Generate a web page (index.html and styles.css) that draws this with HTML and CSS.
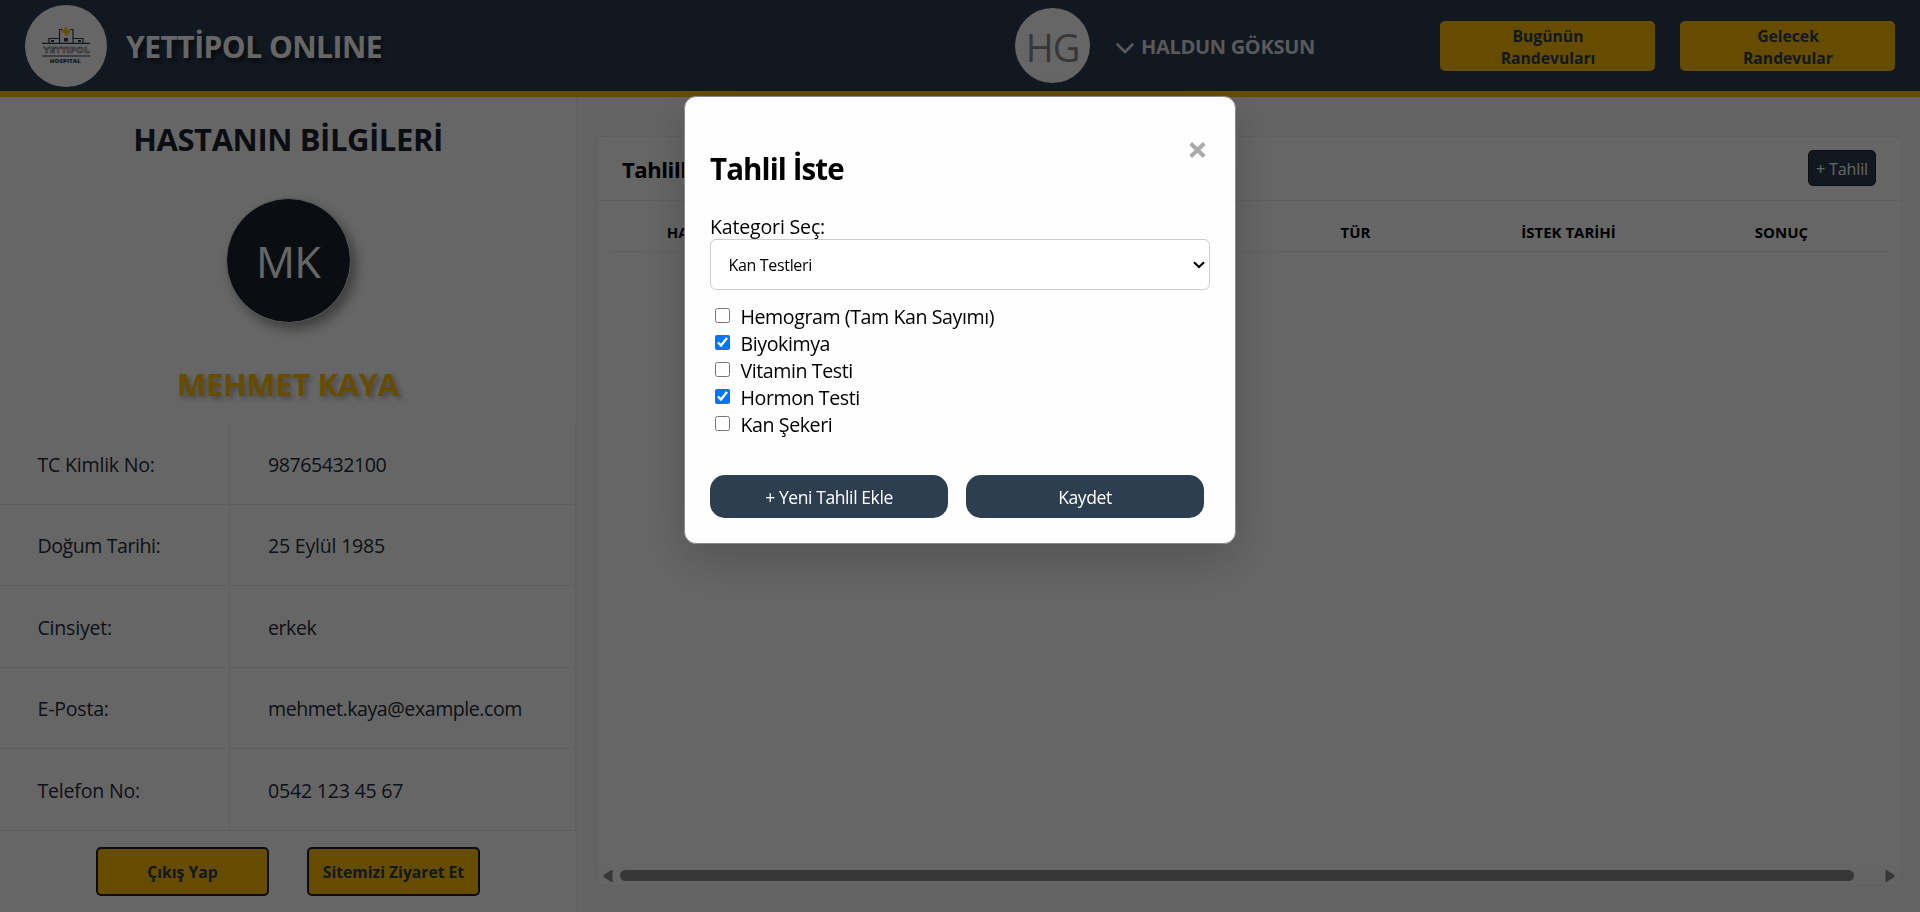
FILE: index.html
```html
<!DOCTYPE html>
<html lang="tr">
<head>
<meta charset="utf-8">
<title>Yettipol Online</title>
<link rel="stylesheet" href="styles.css">
</head>
<body>
<div class="page">
  <header class="header">
    <div class="brand">
      <svg class="logo" viewBox="0 0 82 82">
        <circle cx="41" cy="41" r="41" fill="#fff"/>
        <path d="M17 38.300h48M17 51h48M24 38v-4.500h10M58 38v-4.500H48M34.500 38V24.500h3M48 38V24.500h-3" fill="none" stroke="#2c3e50" stroke-width="1.200"/>
        <path d="M39 33h4v3.500h-4zM26 35h3v2h-3zM53 35h3v2h-3z" fill="#2c3e50"/>
        <path d="M39.500 22.500h3v2.700h2.700v2.600h-2.700v3h-3v-3h-2.700v-2.600h2.700z" fill="#ffbf00"/>
        <text class="logo-name" x="41.500" y="48.200" text-anchor="middle" textLength="46" lengthAdjust="spacingAndGlyphs">YETTIPOL</text>
        <text class="logo-sub" x="40.300" y="57.700" text-anchor="middle" textLength="31" lengthAdjust="spacingAndGlyphs">HOSPITAL</text>
      </svg>
      <h1 class="brand-name">YETTİPOL ONLINE</h1>
    </div>
    <div class="user">
      <div class="user-avatar">HG</div>
      <svg class="chevron" viewBox="0 0 18 11"><path d="M1.500 1.500L9 9l7.500-7.500" fill="none" stroke="#dedede" stroke-width="2.600" stroke-linecap="round" stroke-linejoin="round"/></svg>
      <div class="user-name">HALDUN GÖKSUN</div>
    </div>
    <nav class="nav">
      <button class="nav-btn">Bugünün<br>Randevuları</button>
      <button class="nav-btn">Gelecek<br>Randevular</button>
    </nav>
  </header>
  <div class="content">
    <aside class="sidebar">
      <h2 class="side-title">HASTANIN BİLGİLERİ</h2>
      <div class="patient-avatar">MK</div>
      <h2 class="patient-name">MEHMET KAYA</h2>
      <div class="info">
        <div class="row"><div class="key snug">TC Kimlik No:</div><div class="val tight">98765432100</div></div>
        <div class="row"><div class="key tight">Doğum Tarihi:</div><div class="val snug">25 Eylül 1985</div></div>
        <div class="row"><div class="key snug">Cinsiyet:</div><div class="val tight">erkek</div></div>
        <div class="row"><div class="key snug">E-Posta:</div><div class="val tight">mehmet.kaya@example.com</div></div>
        <div class="row"><div class="key snug">Telefon No:</div><div class="val snug">0542 123 45 67</div></div>
      </div>
      <div class="side-actions">
        <button class="side-btn">Çıkış Yap</button>
        <button class="side-btn">Sitemizi Ziyaret Et</button>
      </div>
    </aside>
    <main class="main">
      <section class="card">
        <div class="card-head">
          <h3 class="card-title">Tahliller</h3>
          <button class="add-btn">+ Tahlil</button>
        </div>
        <div class="table-head">
          <div>HASTA TC NO</div><div></div><div></div>
          <div>TÜR</div>
          <div>İSTEK TARİHİ</div>
          <div>SONUÇ</div>
        </div>
        <div class="table-body"></div>
        <div class="scrollbar">
          <svg width="10" height="12" viewBox="0 0 10 12"><path d="M9.500 0v12h-1L.5 7V5l8-5z" fill="#8b8b8b"/></svg>
          <div class="thumb"></div>
          <svg width="10" height="12" viewBox="0 0 10 12"><path d="M.5 0v12h1l8-5V5l-8-5z" fill="#8b8b8b"/></svg>
        </div>
      </section>
    </main>
  </div>
</div>
<div class="overlay">
  <div class="modal">
    <svg class="close" viewBox="0 0 17 16"><path d="M1.700 1.500l13.600 13M15.300 1.500L1.700 14.500" stroke="#aaa" stroke-width="4"/></svg>
    <h2 class="modal-title">Tahlil İste</h2>
    <label class="field-label" for="category">Kategori Seç:</label>
    <div class="select-wrap">
      <select class="select" id="category"><option>Kan Testleri</option></select>
      <svg class="arrow" viewBox="0 0 12 8"><path d="M1 1.300l5 4.700 5-4.700" fill="none" stroke="#000" stroke-width="2.200"/></svg>
    </div>
    <div class="checks">
      <label class="check"><input type="checkbox">Hemogram (Tam Kan Sayımı)</label>
      <label class="check"><input type="checkbox" checked>Biyokimya</label>
      <label class="check"><input type="checkbox">Vitamin Testi</label>
      <label class="check"><input type="checkbox" checked>Hormon Testi</label>
      <label class="check"><input type="checkbox">Kan Şekeri</label>
    </div>
    <div class="modal-actions">
      <button class="modal-btn">+ Yeni Tahlil Ekle</button>
      <button class="modal-btn">Kaydet</button>
    </div>
  </div>
</div>
</body>
</html>
```
FILE: styles.css
```css
* { box-sizing: border-box; }
body { margin: 0; font-family: "Open Sans", "Noto Sans", sans-serif; color: #000; background: #fafafa; overflow: hidden; }
h1, h2, h3 { margin: 0; font-weight: 700; }
button { font-family: inherit; padding: 0; cursor: pointer; }

.page { height: 912px; display: flex; flex-direction: column; }
.header { height: 97px; flex: none; display: flex; align-items: center; padding: 1px 25px 0; background: #2c3e50; border-bottom: 6px solid #ffbf00; }
.brand { flex: 1; display: flex; align-items: center; gap: 18px; }
.logo { width: 82px; height: 82px; }
.logo-name { font: 700 9.500px "Open Sans", sans-serif; fill: #fff; stroke: #5d6a78; stroke-width: .6px; }
.logo-sub { font: 800 5.500px "Open Sans", sans-serif; fill: #2c3e50; }
.brand-name { padding: 2px 0 0 1px; font-size: 30px; line-height: 40px; letter-spacing: -.53px; color: #fff; text-shadow: 3px 4px 5px rgba(0, 0, 0, .6); white-space: nowrap; }
.user { width: 425px; display: flex; align-items: center; }
.user-avatar { width: 75px; height: 75px; margin: -1px 26px 0 0; padding-top: 2px; border-radius: 50%; background: #fff; color: #8a8a8a; font-size: 38px; letter-spacing: -1px; display: flex; align-items: center; justify-content: center; }
.chevron { width: 18px; height: 11px; margin: 4px 7px 0 0; }
.user-name { font-size: 20px; font-weight: 700; letter-spacing: -.3px; color: #dedede; }
.nav { display: flex; gap: 25px; }
.nav-btn { width: 215px; height: 50px; padding: 1px 0 0 1px; border: 0; border-radius: 5px; background: #ffbf00; color: #2c3e50; font-size: 15.700px; font-weight: 700; line-height: 22px; }

.content { flex: 1; min-height: 0; display: flex; }
.sidebar { width: 577px; padding-top: 20px; background: #fff; border-right: 1px solid #f0f0f0; }
.side-title, .patient-name { font-size: 31px; line-height: 44px; letter-spacing: -.42px; text-align: center; }
.side-title { color: #1a252f; }
.patient-avatar { width: 125px; height: 125px; margin: 37px auto 39px; padding-top: 1px; border-radius: 50%; border: 1px solid #e4e4e4; background: #1a252f; color: #fff; font-size: 43.500px; letter-spacing: -.8px; display: flex; align-items: center; justify-content: center; box-shadow: 5px 6px 12px rgba(0, 0, 0, .4); }
.patient-name { letter-spacing: -.35px; color: #ffbf00; text-shadow: 3px 3px 5px rgba(0, 0, 0, .3); }
.info { margin-top: 17px; }
.row { height: 81.500px; display: flex; border-bottom: 1px solid #eee; font-size: 19.600px; color: #1f2d3a; }
.key, .val { display: flex; align-items: center; padding: 2px 0 0 38px; border-right: 1px solid #f0f0f0; }
.key { width: 230px; padding-left: 37.500px; }
.val { flex: 1; }
.snug { letter-spacing: -.23px; }
.tight { letter-spacing: -.46px; }
.side-actions { display: flex; justify-content: center; gap: 38px; margin-top: 16px; }
.side-btn { width: 173px; height: 49px; padding-top: 1px; border: 2px solid #1a252f; border-radius: 5px; background: #ffbf00; color: #2c3e50; font-size: 15.700px; font-weight: 700; white-space: nowrap; }

.main { flex: 1; padding: 39px 18px 26px 19px; }
.card { height: 750px; border: 1px solid #f0f0f0; border-radius: 6px; background: #fff; display: flex; flex-direction: column; }
.card-head { height: 64px; flex: none; display: flex; justify-content: space-between; align-items: center; padding: 0 25px; border-bottom: 1px solid #eee; }
.card-title { font-size: 22px; line-height: 30px; letter-spacing: -.4px; }
.add-btn { width: 68px; height: 36px; margin-top: -1px; padding-top: 1px; border: 1px solid #1a252f; border-radius: 5px; background: #2c3e50; color: #fff; font-size: 16px; letter-spacing: -.1px; white-space: nowrap; }
.table-head { height: 51px; margin: 0 13px; flex: none; display: grid; grid-template-columns: repeat(6, 1fr); border-bottom: 1px solid #f0f0f0; padding-top: 19px; text-align: center; font-size: 15px; font-weight: 700; line-height: 24px; }
.table-body { flex: 1; }
.scrollbar { height: 19px; flex: none; display: flex; align-items: center; justify-content: space-between; background: #fcfcfc; padding: 0 6px; }
.thumb { flex: 1; height: 11px; margin: 0 31px 0 7px; border-radius: 6px; background: #8b8b8b; }

.overlay { position: fixed; inset: 0; background: rgba(0, 0, 0, .6); display: flex; justify-content: center; align-items: flex-start; padding-top: 96px; }
.modal { position: relative; width: 552px; height: 448px; padding: 52px 25px 25px; border: 1px solid #888; border-radius: 12px; background: #fefefe; box-shadow: 0 16px 50px rgba(0, 0, 0, .2); }
.close { position: absolute; right: 29px; top: 45px; width: 17px; height: 16px; }
.modal-title { font-size: 29.500px; line-height: 40px; letter-spacing: -.9px; }
.field-label { display: block; margin-top: 24px; font-size: 19.600px; line-height: 27px; letter-spacing: -.2px; }
.select-wrap { display: grid; align-items: center; height: 51px; margin-top: -1px; }
.select-wrap > * { grid-area: 1 / 1; }
.select { appearance: none; width: 500px; height: 51px; padding: 0 0 0 17.500px; border: 1px solid #ccc; border-radius: 6px; background: #fff; font: 16px "Open Sans", sans-serif; letter-spacing: -.33px; color: #000; }
.arrow { width: 12px; height: 8px; justify-self: end; margin-right: 5px; pointer-events: none; }
.checks { margin-top: 13px; }
.check { display: flex; height: 27px; font-size: 19.600px; line-height: 27px; letter-spacing: -.42px; }
.check input { width: 15px; height: 15px; margin: 5px 10.500px 0 5px; }
.modal-actions { display: flex; gap: 18px; margin-top: 37px; }
.modal-btn { width: 238px; height: 43px; border: 0; border-radius: 15px; background: #2c3e50; color: #fff; font-size: 17.500px; letter-spacing: -.4px; white-space: nowrap; }
```
